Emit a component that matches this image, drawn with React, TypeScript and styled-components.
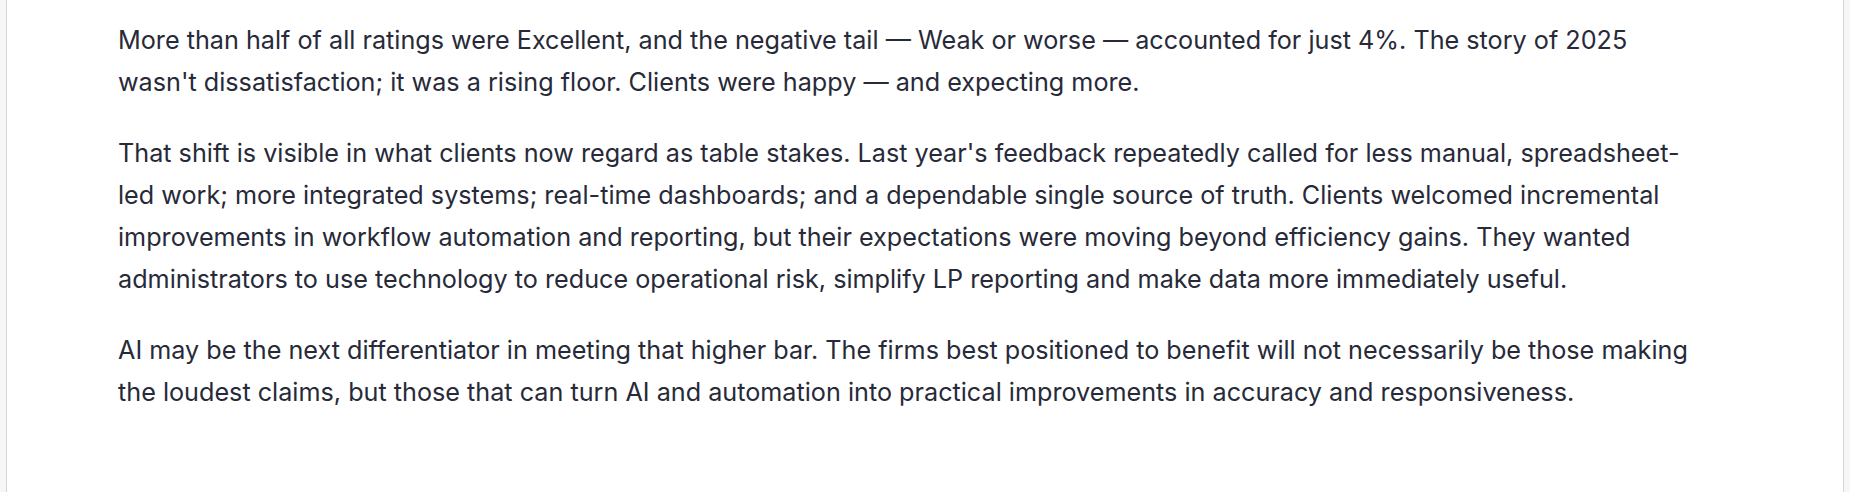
import React from "react";
import styled, { createGlobalStyle } from "styled-components";

const GlobalStyle = createGlobalStyle`
  html, body {
    margin: 0;
    padding: 0;
    background-color: #f6f6f6;
  }
  #root {
    min-height: 100vh;
    display: flex;
  }
`;

const Panel = styled.main`
  margin-left: 6px;
  width: 1838px;
  min-height: 100vh;
  box-sizing: border-box;
  background-color: #ffffff;
  border-left: 1px solid #d6d6d6;
  border-right: 1px solid #d6d6d6;
  padding: 19px 0 0 111px;
`;

const Article = styled.article`
  max-width: 1582px;
  font-family: Inter, "Noto Sans", sans-serif;
  font-size: 25.2px;
  line-height: 42px;
  color: #272a38;
`;

const Paragraph = styled.p`
  margin: 0 0 29px;
`;

const paragraphs = [
  "More than half of all ratings were Excellent, and the negative tail \u2014 Weak or worse \u2014 accounted for just 4%. The story of 2025 wasn't dissatisfaction; it was a rising floor. Clients were happy \u2014 and expecting more.",
  "That shift is visible in what clients now regard as table stakes. Last year's feedback repeatedly called for less manual, spreadsheet-led work; more integrated systems; real-time dashboards; and a dependable single source of truth. Clients welcomed incremental improvements in workflow automation and reporting, but their expectations were moving beyond efficiency gains. They wanted administrators to use technology to reduce operational risk, simplify LP reporting and make data more immediately useful.",
  "AI may be the next differentiator in meeting that higher bar. The firms best positioned to benefit will not necessarily be those making the loudest claims, but those that can turn AI and automation into practical improvements in accuracy and responsiveness.",
];

const App: React.FC = () => {
  return (
    <>
      <GlobalStyle />
      <Panel>
        <Article>
          {paragraphs.map((text, i) => (
            <Paragraph key={i}>{text}</Paragraph>
          ))}
        </Article>
      </Panel>
    </>
  );
};

export default App;
